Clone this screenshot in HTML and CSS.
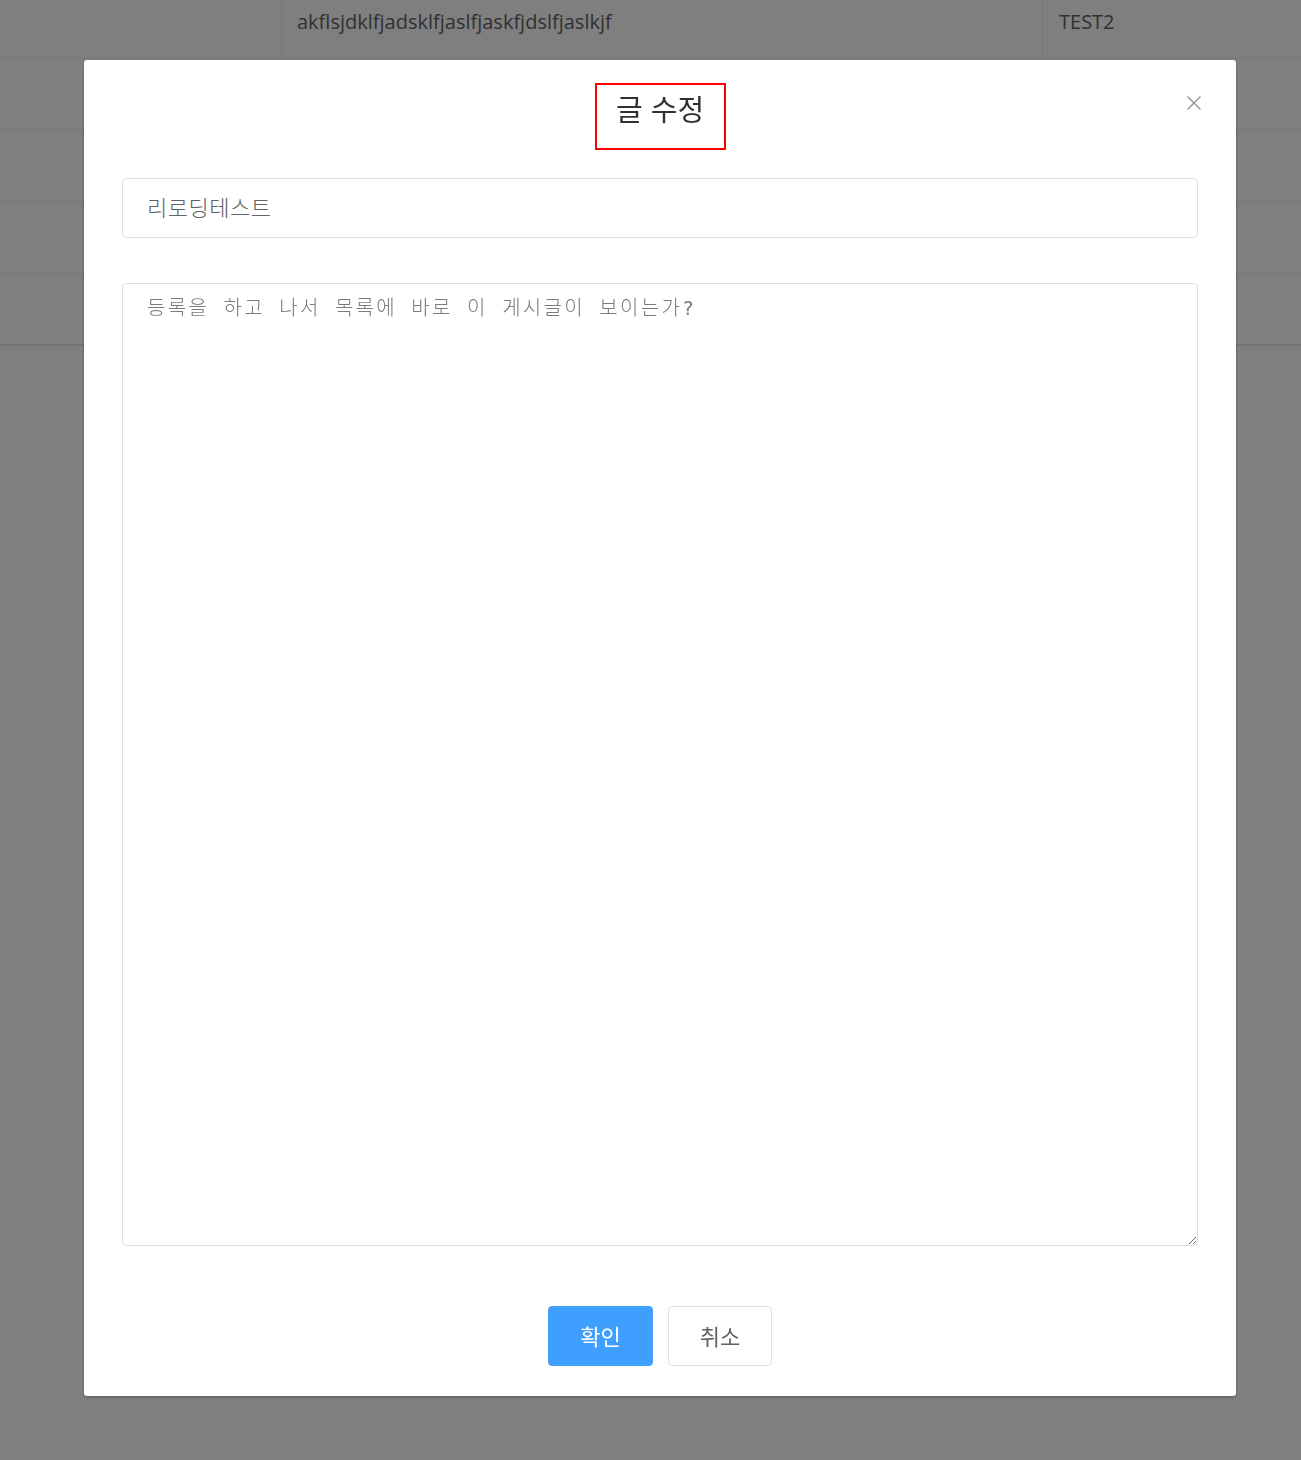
FILE: index.html
```html
<!DOCTYPE html>
<html lang="ko">
<head>
    <meta charset="UTF-8">
    <meta name="viewport" content="width=device-width, initial-scale=1.0">
    <title>글 수정</title>
    <link rel="stylesheet" href="styles.css">
</head>
<body>
    <div class="board">
        <div class="row first">
            <div class="cell num"></div>
            <div class="cell title">akflsjdklfjadsklfjaslfjaskfjdslfjaslkjf</div>
            <div class="cell writer">TEST2</div>
        </div>
        <div class="row"><div class="cell num"></div><div class="cell title"></div><div class="cell writer"></div></div>
        <div class="row"><div class="cell num"></div><div class="cell title"></div><div class="cell writer"></div></div>
        <div class="row"><div class="cell num"></div><div class="cell title"></div><div class="cell writer"></div></div>
        <div class="row last"><div class="cell num"></div><div class="cell title"></div><div class="cell writer"></div></div>
    </div>

    <div class="overlay">
        <div class="dialog">
            <div class="dialog-header">
                <span class="dialog-title">글 수정</span>
                <button class="dialog-close" aria-label="닫기">
                    <svg width="16" height="16" viewBox="0 0 16 16">
                        <path d="M1.5 1.5 L14.5 14.5 M14.5 1.5 L1.5 14.5" stroke="#909399" stroke-width="1.4" fill="none"/>
                    </svg>
                </button>
            </div>
            <div class="dialog-body">
                <input class="field" type="text" value="리로딩테스트">
                <textarea class="field area">등록을 하고 나서 목록에 바로 이 게시글이 보이는가?</textarea>
            </div>
            <div class="dialog-footer">
                <button class="btn primary">확인</button>
                <button class="btn">취소</button>
            </div>
        </div>
    </div>
</body>
</html>
```

FILE: styles.css
```css
body {
    margin: 0;
    height: 1460px;
    background: #fff;
    font-family: "Open Sans", "Noto Sans CJK KR", sans-serif;
    color: #606266;
}
.board {
    width: 100%;
}
.row {
    display: flex;
    height: 71px;
    border-bottom: 1px solid #ebeef5;
}
.row.first {
    height: 57px;
}
.row.last {
    border-bottom: 2px solid #e4e6ec;
    height: 70px;
}
.cell {
    box-sizing: border-box;
    font-size: 20px;
    padding: 8px 15px 0;
}
.num {
    width: 282px;
    border-right: 1px solid #ebeef5;
}
.title {
    width: 761px;
    border-right: 1px solid #ebeef5;
}
.writer {
    flex: 1;
    padding-left: 16px;
}
.overlay {
    position: fixed;
    inset: 0;
    background: rgba(0, 0, 0, 0.5);
}
.dialog {
    box-sizing: border-box;
    width: 1152px;
    height: 1336px;
    margin: 60px 0 0 84px;
    background: #fff;
    border-radius: 3px;
    box-shadow: 0 1px 3px rgba(0, 0, 0, 0.3);
    display: flex;
    flex-direction: column;
    padding: 0 38px 30px;
}
.dialog-header {
    position: relative;
    display: flex;
    justify-content: center;
    padding-top: 23px;
}
.dialog-title {
    box-sizing: border-box;
    width: 131px;
    height: 67px;
    border: 2px solid #ff0000;
    display: flex;
    align-items: center;
    justify-content: center;
    font-family: "Noto Sans CJK KR", sans-serif;
    font-size: 29px;
    color: #303133;
    padding-bottom: 18px;
}
.dialog-close {
    position: absolute;
    top: 35px;
    right: -4px;
    background: none;
    border: none;
    padding: 0;
    width: 16px;
    height: 16px;
    cursor: pointer;
}
.dialog-body {
    display: flex;
    flex-direction: column;
    gap: 45px;
    padding-top: 28px;
}
.field {
    box-sizing: border-box;
    width: 100%;
    border: 1px solid #dcdfe6;
    border-radius: 4px;
    padding: 0 24px;
    font-family: "Noto Sans CJK KR", sans-serif;
    font-size: 22px;
    letter-spacing: 0.5px;
    color: #606266;
    font-weight: 300;
    outline: none;
}
input.field {
    height: 60px;
    padding-bottom: 5px;
}
.area {
    height: 963px;
    padding-top: 10px;
    resize: vertical;
    font-family: "DejaVu Sans Mono", "Noto Sans CJK KR", monospace;
    font-size: 20px;
    letter-spacing: 2.3px;
    line-height: 28px;
    color: #7a7b7f;
}
.dialog-footer {
    margin-top: auto;
    display: flex;
    justify-content: center;
    gap: 15px;
}
.btn {
    box-sizing: border-box;
    width: 104px;
    height: 60px;
    border: 1px solid #dcdfe6;
    border-radius: 4px;
    background: #fff;
    color: #606266;
    font-family: "Noto Sans CJK KR", sans-serif;
    font-size: 22px;
    cursor: pointer;
    padding-bottom: 3px;
}
.btn.primary {
    width: 105px;
    background: #409eff;
    border-color: #409eff;
    color: #fff;
}
```
